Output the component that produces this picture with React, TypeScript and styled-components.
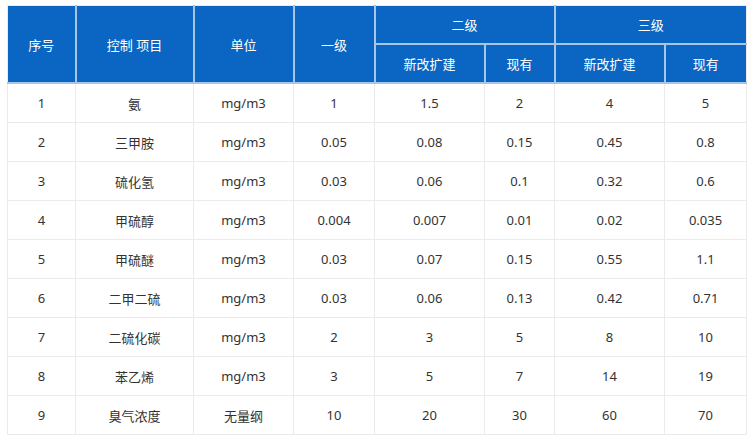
import React from "react";
import styled, { createGlobalStyle } from "styled-components";

const Global = createGlobalStyle`
  html, body { margin: 0; padding: 0; background: #fff; }
  body { font-family: "Noto Sans", "Noto Sans CJK SC", sans-serif; }
`;

const Wrap = styled.div`
  padding: 5px 0 0 7px;
`;

const Table = styled.table`
  border-collapse: collapse;
  table-layout: fixed;
  width: 739px;
  font-size: 13px;
  color: #333;
  border: 1px solid #ebebeb;
`;

const Col = styled.col<{ $w: number }>`
  width: ${(p) => p.$w}px;
`;

const Th = styled.th`
  background: #0a66c2;
  color: #fff;
  font-weight: normal;
  height: 37px;
  padding: 0;
  text-align: center;
  vertical-align: middle;
  border: 2px solid #a9c5e6;
  border-top: none;
  &:first-child { border-left: none; }
  &:last-child { border-right: none; }
`;

const Td = styled.td`
  height: 38px;
  padding: 0;
  text-align: center;
  vertical-align: middle;
  border: 1px solid #ebebeb;
`;

const widths = [68, 118, 100, 81, 110, 70, 110, 82];

const rows: string[][] = [
  ["1", "氨", "mg/m3", "1", "1.5", "2", "4", "5"],
  ["2", "三甲胺", "mg/m3", "0.05", "0.08", "0.15", "0.45", "0.8"],
  ["3", "硫化氢", "mg/m3", "0.03", "0.06", "0.1", "0.32", "0.6"],
  ["4", "甲硫醇", "mg/m3", "0.004", "0.007", "0.01", "0.02", "0.035"],
  ["5", "甲硫醚", "mg/m3", "0.03", "0.07", "0.15", "0.55", "1.1"],
  ["6", "二甲二硫", "mg/m3", "0.03", "0.06", "0.13", "0.42", "0.71"],
  ["7", "二硫化碳", "mg/m3", "2", "3", "5", "8", "10"],
  ["8", "苯乙烯", "mg/m3", "3", "5", "7", "14", "19"],
  ["9", "臭气浓度", "无量纲", "10", "20", "30", "60", "70"],
];

export default function App() {
  return (
    <>
      <Global />
      <Wrap>
        <Table>
          <colgroup>
            {widths.map((w, i) => (
              <Col key={i} $w={w} />
            ))}
          </colgroup>
          <thead>
            <tr>
              <Th rowSpan={2}>序号</Th>
              <Th rowSpan={2}>控制 项目</Th>
              <Th rowSpan={2}>单位</Th>
              <Th rowSpan={2}>一级</Th>
              <Th colSpan={2}>二级</Th>
              <Th colSpan={2}>三级</Th>
            </tr>
            <tr>
              <Th>新改扩建</Th>
              <Th>现有</Th>
              <Th>新改扩建</Th>
              <Th>现有</Th>
            </tr>
          </thead>
          <tbody>
            {rows.map((r) => (
              <tr key={r[0]}>
                {r.map((c, i) => (
                  <Td key={i}>{c}</Td>
                ))}
              </tr>
            ))}
          </tbody>
        </Table>
      </Wrap>
    </>
  );
}
